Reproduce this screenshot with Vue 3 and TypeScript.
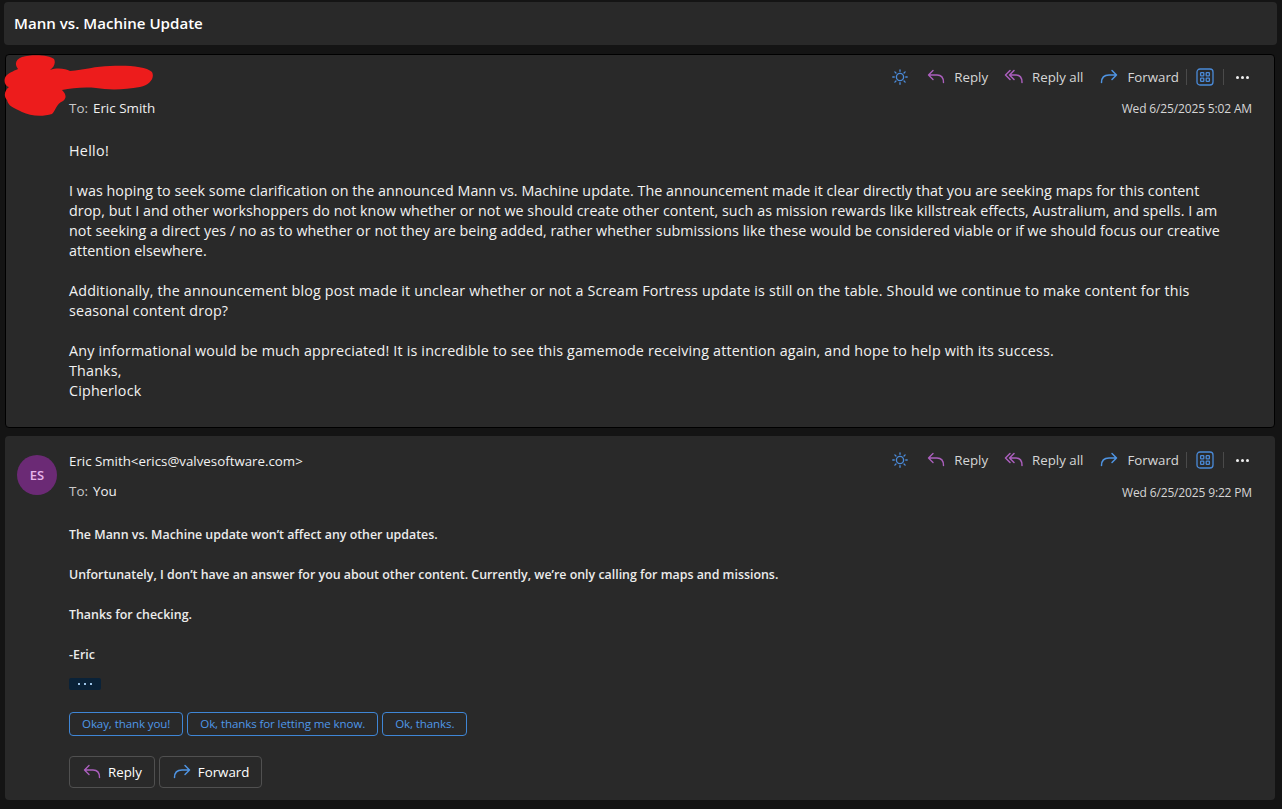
<script setup lang="ts">
interface Msg { id: string; date: string; to: string }
const actions = [
  { label: 'Reply', icon: 'reply' },
  { label: 'Reply all', icon: 'replyall' },
  { label: 'Forward', icon: 'forward' },
]
const first: Msg = { id: 'a', date: 'Wed 6/25/2025 5:02 AM', to: 'Eric Smith' }
const second: Msg = { id: 'b', date: 'Wed 6/25/2025 9:22 PM', to: 'You' }
const msgs = [first, second]
const suggestions = ['Okay, thank you!', 'Ok, thanks for letting me know.', 'Ok, thanks.']
</script>

<template>
  <div class="page">
    <header class="subject">Mann vs. Machine Update</header>

    <article v-for="m in msgs" :key="m.id" class="card" :class="m.id === 'a' ? 'card-a' : 'card-b'">
      <svg v-if="m.id === 'a'" class="scribble" viewBox="0 0 155 62" width="155" height="62" aria-hidden="true">
        <path fill="#ed1c1c" d="M22 3C32 0 50 1 54 5C56 9 54 13 50 16C58 13 66 15 70 17C84 16 96 12 110 12C126 11 146 12 152 18C155 24 150 31 140 33C124 36 108 36 96 34C84 33 72 34 62 36C66 40 67 44 63 47C56 50 56 56 52 60C42 63 30 62 22 58C14 54 8 52 7 46C3 42 5 36 9 33C5 32 3 26 6 22C10 18 16 16 18 15C14 10 16 5 22 3Z" />
      </svg>

      <div class="head">
        <div v-if="m.id === 'b'" class="avatar">ES</div>
        <div class="who">
          <div class="from">
            <template v-if="m.id === 'b'">Eric Smith&lt;erics@valvesoftware.com&gt;</template>
          </div>
          <div class="to"><span class="to-label">To:</span><span class="to-name">{{ m.to }}</span></div>
        </div>
        <div class="side">
          <div class="actions">
            <svg class="ic sun" viewBox="0 0 20 20" width="18" height="18" fill="none" stroke="#4a8ad8" stroke-width="1.5">
              <circle cx="10" cy="10" r="4" />
              <path stroke-linecap="round" d="M10 2v1.6M10 16.4V18M2 10h1.6M16.4 10H18M4.3 4.3l1.2 1.2M14.5 14.5l1.2 1.2M4.3 15.7l1.2-1.2M14.5 5.5l1.2-1.2" />
            </svg>
            <template v-for="a in actions" :key="a.label">
              <span class="act">
                <svg v-if="a.icon === 'reply'" viewBox="0 0 20 20" width="20" height="20" fill="none" stroke="#ab5fbd" stroke-width="1.4" stroke-linecap="round" stroke-linejoin="round">
                  <path d="M7 3.5L2.5 8L7 12.5M2.5 8H11C15 8 17.5 10.5 17.5 15.5" />
                </svg>
                <svg v-else-if="a.icon === 'replyall'" viewBox="0 0 20 20" width="20" height="20" fill="none" stroke="#ab5fbd" stroke-width="1.5" stroke-linecap="round" stroke-linejoin="round">
                  <path d="M6 3.5L1.5 8L6 12.5M10 3.5L5.5 8L10 12.5M5.5 8H12C16 8 18 10.5 18 15.5" />
                </svg>
                <svg v-else viewBox="0 0 20 20" width="20" height="20" fill="none" stroke="#4f94e2" stroke-width="1.5" stroke-linecap="round" stroke-linejoin="round">
                  <path d="M13 3.5L17.5 8L13 12.5M17.5 8H10C5.5 8 2.5 10.5 2.5 15.5" />
                </svg>
                <span>{{ a.label }}</span>
              </span>
            </template>
            <span class="sep"></span>
            <svg class="ic grid" viewBox="0 0 18 18" width="18" height="18" fill="none" stroke="#4a8ad8" stroke-width="1.3">
              <rect x="1" y="1" width="16" height="16" rx="3" />
              <rect x="4.6" y="4.6" width="3.2" height="3.2" rx=".6" />
              <rect x="10.2" y="4.6" width="3.2" height="3.2" rx=".6" />
              <rect x="4.6" y="10.2" width="3.2" height="3.2" rx=".6" />
              <rect x="10.2" y="10.2" width="3.2" height="3.2" rx=".6" />
            </svg>
            <span class="sep sep2"></span>
            <span class="more"><i></i><i></i><i></i></span>
          </div>
          <div class="date">{{ m.date }}</div>
        </div>
      </div>

      <div v-if="m.id === 'a'" class="body body-a">
        <p>Hello!</p>
        <p>I was hoping to seek some clarification on the announced Mann vs. Machine update. The announcement made it clear directly that you are seeking maps for this content<br />drop, but I and other workshoppers do not know whether or not we should create other content, such as mission rewards like killstreak effects, Australium, and spells. I am<br />not seeking a direct yes / no as to whether or not they are being added, rather whether submissions like these would be considered viable or if we should focus our creative<br />attention elsewhere.</p>
        <p>Additionally, the announcement blog post made it unclear whether or not a Scream Fortress update is still on the table. Should we continue to make content for this<br />seasonal content drop?</p>
        <p>Any informational would be much appreciated! It is incredible to see this gamemode receiving attention again, and hope to help with its success.<br />Thanks,<br />Cipherlock</p>
      </div>

      <div v-else class="body body-b">
        <p>The Mann vs. Machine update won’t affect any other updates.</p>
        <p>Unfortunately, I don’t have an answer for you about other content. Currently, we’re only calling for maps and missions.</p>
        <p>Thanks for checking.</p>
        <p>-Eric</p>
        <div class="ellipsis"><i></i><i></i><i></i></div>
        <div class="chips">
          <span v-for="s in suggestions" :key="s" class="chip">{{ s }}</span>
        </div>
        <div class="btns">
          <span class="btn">
            <svg viewBox="0 0 20 20" width="20" height="20" fill="none" stroke="#ab5fbd" stroke-width="1.4" stroke-linecap="round" stroke-linejoin="round">
              <path d="M7 3.5L2.5 8L7 12.5M2.5 8H11C15 8 17.5 10.5 17.5 15.5" />
            </svg>
            Reply
          </span>
          <span class="btn">
            <svg viewBox="0 0 20 20" width="20" height="20" fill="none" stroke="#4f94e2" stroke-width="1.5" stroke-linecap="round" stroke-linejoin="round">
              <path d="M13 3.5L17.5 8L13 12.5M17.5 8H10C5.5 8 2.5 10.5 2.5 15.5" />
            </svg>
            Forward
          </span>
        </div>
      </div>
    </article>
  </div>
</template>

<style>
html, body { margin: 0; background: #141414; }
</style>

<style scoped>
.page {
  box-sizing: border-box;
  width: 1282px;
  height: 809px;
  overflow: hidden;
  background: #141414;
  padding: 2px 5px 0 4px;
  font-family: "Open Sans", "Noto Sans", sans-serif;
  color: #fff;
}
.subject {
  height: 43px;
  box-sizing: border-box;
  padding: 0 0 2px 10px;
  display: flex;
  align-items: center;
  background: #292929;
  border-radius: 4px;
  font-size: 15.1px;
  font-weight: 600;
  color: #fff;
}
.card {
  position: relative;
  background: #292929;
  border-radius: 4px;
  margin-left: 1px;
  margin-right: 2px;
}
.card-a {
  margin-top: 9px;
  height: 374px;
  box-sizing: border-box;
  border: 1px solid #000;
}
.card-b {
  margin-top: 8px;
  height: 364px;
  box-sizing: border-box;
}
.scribble {
  position: absolute;
  left: -6px;
  top: -1px;
}
.head {
  display: flex;
  align-items: flex-start;
}
.card-a .head { padding: 10px 25px 0 63px; }
.card-b .head { padding: 12px 26px 0 12px; }
.avatar {
  width: 40px;
  height: 40px;
  margin-top: 7px;
  margin-right: 12px;
  border-radius: 50%;
  background: #6b2a75;
  color: #e6b4ea;
  font-size: 13px;
  font-weight: 600;
  display: flex;
  align-items: center;
  justify-content: center;
  flex: none;
}
.who { flex: 1; min-width: 0; }
.card-b .who { padding-top: 1px; }
.from {
  height: 24px;
  font-size: 13.3px;
  line-height: 24px;
  color: #f2f2f2;
}
.to {
  margin-top: 8px;
  font-size: 13.4px;
  line-height: 20px;
}
.card-a .to { margin-top: 9px; }
.to-label { color: #c8c8c8; margin-right: 5px; }
.to-name { color: #f0f0f0; }
.side {
  display: flex;
  flex-direction: column;
  align-items: flex-end;
}
.actions {
  display: flex;
  align-items: center;
  height: 24px;
  font-size: 13.3px;
  color: #d6d6d6;
}
.ic { flex: none; }
.sun { margin-right: 17px; }
.act {
  display: inline-flex;
  align-items: center;
  gap: 8px;
  margin-right: 16px;
}
.act svg { flex: none; }
.sep {
  width: 1px;
  height: 16px;
  background: #4a4a4a;
  margin-right: 9px;
  margin-left: -9px;
}
.sep2 { margin-left: 9px; margin-right: 12px; }
.more {
  display: inline-flex;
  gap: 2px;
}
.more i {
  width: 3px;
  height: 3px;
  background: #f0f0f0;
  border-radius: 50%;
}
.date {
  margin-top: 13px;
  margin-right: -3px;
  font-size: 12px;
  line-height: 16px;
  color: #d6d6d6;
  letter-spacing: -0.15px;
}
.card-a .date { margin-top: 12px; }
.body { color: #f2f2f2; }
.body p { margin: 0 0 20px; }
.body-a {
  padding: 23px 0 0 63px;
  font-size: 14.3px;
  line-height: 20px;
  white-space: nowrap;
}
.body-a p:nth-child(1) { letter-spacing: 0.3px; }
.body-a p:nth-child(2) { letter-spacing: 0.05px; }
.body-a p:nth-child(3),
.body-a p:nth-child(4) { letter-spacing: 0.18px; }
.body-b {
  padding: 24px 0 0 64px;
  font-size: 12.4px;
  font-weight: 600;
  line-height: 20px;
  color: #ececec;
}
.body-b p:nth-of-type(4) { margin-bottom: 13px; }
.ellipsis {
  width: 32px;
  height: 12px;
  background: #0a2238;
  border-radius: 2px;
  display: flex;
  align-items: center;
  justify-content: center;
  gap: 4px;
}
.ellipsis i {
  width: 2px;
  height: 2px;
  background: #9cc4e8;
}
.chips {
  display: flex;
  gap: 4px;
  margin-top: 22px;
}
.chip {
  box-sizing: border-box;
  height: 24px;
  padding: 0 12px;
  display: inline-flex;
  align-items: center;
  border: 1px solid #3f86d6;
  border-radius: 4px;
  font-size: 11.55px;
  font-weight: 400;
  color: #4f97e8;
  letter-spacing: -0.1px;
}
.btns {
  display: flex;
  gap: 4px;
  margin-top: 20px;
}
.btn {
  box-sizing: border-box;
  height: 32px;
  padding: 0 12px;
  display: inline-flex;
  align-items: center;
  gap: 6px;
  border: 1px solid #505050;
  border-radius: 4px;
  font-size: 13.3px;
  font-weight: 500;
  color: #fff;
}
</style>
